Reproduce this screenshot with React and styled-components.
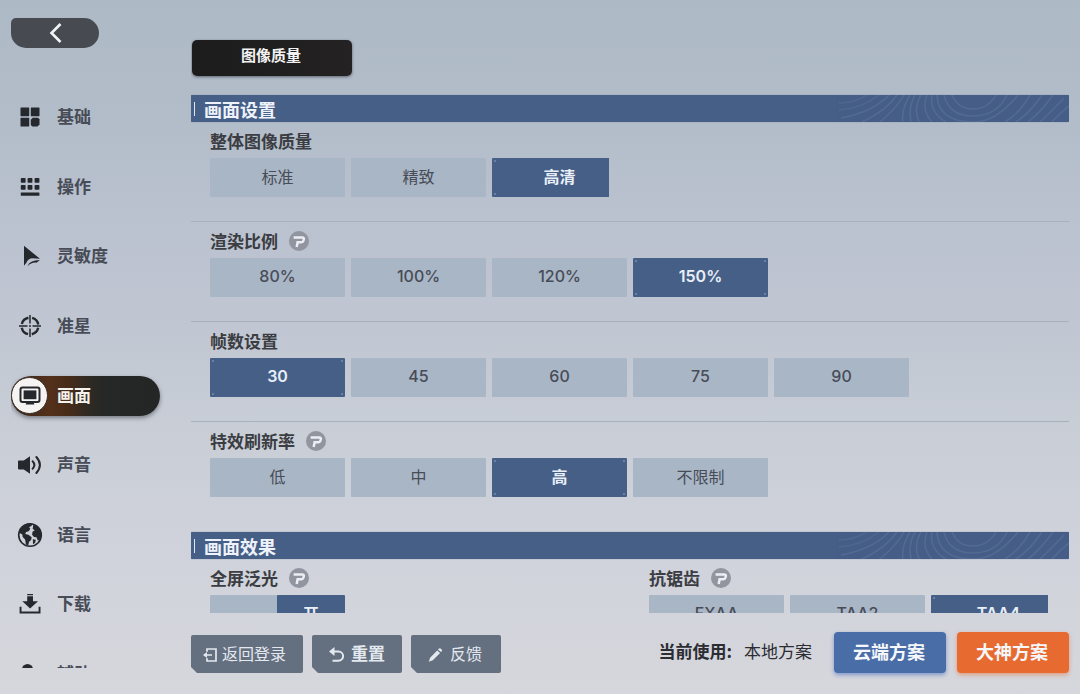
// core
import React, { useState } from 'react'
import styled, { createGlobalStyle, css } from 'styled-components'

// theme
const colors = {
  ink: '#25282d',
  label: '#3b3d42',
  muted: '#474c57',
  blue: '#465f87',
  option: '#a9b6c6',
  slate: '#646f7f',
}

const fonts = '"Noto Sans CJK SC", sans-serif'
const numberFonts = 'Inter, "Noto Sans CJK SC", sans-serif'

// styles
const GlobalStyle = createGlobalStyle`
  *, *::before, *::after {
    box-sizing: border-box;
  }

  body {
    margin: 0;
    font-family: ${fonts};
    color: ${colors.ink};
  }

  button {
    border: 0;
    padding: 0;
    font-family: inherit;
    cursor: pointer;
  }
`

const Page = styled.div`
  display: flex;
  height: 100vh;
  overflow: hidden;
  background: linear-gradient(
    to bottom,
    #adb9c5 0%,
    #b3bdca 18%,
    #bac1cf 31%,
    #c1c7d2 48%,
    #cacfd7 65%,
    #d1d3dc 82%,
    #d6d7dc 100%
  );
`

const Sidebar = styled.aside`
  flex: none;
  display: flex;
  flex-direction: column;
  width: 160px;
  padding: 18px 0 26px 11px;
`

const BackButton = styled.button`
  flex: none;
  display: flex;
  align-items: center;
  justify-content: center;
  width: 88px;
  height: 30px;
  margin-bottom: 49px;
  border-radius: 5px 15px 15px 15px;
  background: #474b51;
`

const NavClip = styled.nav`
  flex: 1;
  min-height: 0;
  margin-right: -10px;
  padding-right: 10px;
  overflow: hidden;
`

const NavList = styled.ul`
  display: flex;
  flex-direction: column;
  justify-content: space-between;
  height: calc(100% + 26px);
  margin: 0;
  padding: 0;
  list-style: none;
`

const NavButton = styled.button`
  display: flex;
  align-items: center;
  gap: 9px;
  width: 100%;
  height: 40px;
  border-radius: 20px;
  background: none;
  color: ${colors.muted};
  font-size: 17px;
  font-weight: bold;
  line-height: 24px;

  ${props => props.$active && css`
    background: linear-gradient(to right, #33261e 0%, #54301a 26%, #482c18 38%, #2f2a23 52%, #262827 62%, #242625 100%);
    box-shadow: 0 2px 4px rgba(40, 44, 54, 0.5);
    color: #f4f2ee;
  `}
`

const NavIcon = styled.span`
  display: flex;
  align-items: center;
  justify-content: center;
  width: 37px;
  height: 37px;
  border-radius: 50%;
  background: ${props => props.$active ? '#f5f4f2' : 'none'};
  border: 1px solid ${props => props.$active ? '#3a2c22' : 'transparent'};
  color: ${colors.ink};
`

const NavText = styled.span`
  padding-bottom: 2px;
`

const Main = styled.main`
  flex: 1;
  min-width: 0;
  display: flex;
  flex-direction: column;
  padding: 0 11px 0 31px;
`

const Scroller = styled.div`
  flex: 1;
  min-height: 0;
  padding-top: 40px;
  overflow: hidden;
`

const Tab = styled.button`
  display: block;
  width: 160px;
  height: 36px;
  margin: 0 0 19px 1px;
  padding: 0 2px 8px 0;
  border-radius: 5px;
  background: linear-gradient(to right, #1c1c1c, #242222);
  box-shadow: 0 1px 3px rgba(40, 44, 54, 0.6);
  color: #f3f3f3;
  font-size: 15px;
  font-weight: bold;
`

const SectionBar = styled.header`
  display: flex;
  align-items: center;
  justify-content: space-between;
  height: 27px;
  padding-left: 3px;
  border-radius: 1px;
  background: ${colors.blue};
  box-shadow: 0 0 1px ${colors.blue};
  overflow: hidden;
`

const SectionTitle = styled.h2`
  display: flex;
  align-items: center;
  gap: 9px;
  margin: 0;
  color: #eef3fb;
  font-size: 18px;
  line-height: 26px;

  &::before {
    content: '';
    width: 1px;
    height: 14px;
    background: #dfe7f3;
  }
`

const Group = styled.section`
  min-width: 0;
  padding: 7px 0 ${props => props.$last ? '35px' : '24px'} 19px;
  border-bottom: ${props => props.$last ? '0' : '1px solid #a9b0bd'};
`

const GroupTitle = styled.h3`
  display: flex;
  align-items: center;
  gap: 11px;
  height: 24px;
  margin: 0 0 5px;
  color: ${colors.label};
  font-size: 17px;
  line-height: 24px;
`

const HelpButton = styled.button`
  display: flex;
  width: 20px;
  height: 20px;
  border-radius: 50%;
  background: #90959f;
`

const OptionRow = styled.div`
  display: flex;
  gap: 6px;
  overflow: hidden;
`

const corner = 'linear-gradient(#6b80a4, #6b80a4)'

const selectedStyle = css`
  background:
    ${corner} 2px 2px / 2px 2px no-repeat,
    ${corner} calc(100% - 2px) 2px / 2px 2px no-repeat,
    ${corner} 2px calc(100% - 2px) / 2px 2px no-repeat,
    ${corner} calc(100% - 2px) calc(100% - 2px) / 2px 2px no-repeat,
    ${colors.blue};
  color: #e9eff8;
`

const Option = styled.button`
  flex: none;
  width: 135px;
  height: 39px;
  padding-bottom: 4px;
  border-radius: 1px;
  background: ${colors.option};
  color: ${colors.muted};
  font-family: ${numberFonts};
  font-size: 16px;
  font-weight: ${props => props.$cjk ? '400' : '500'};

  ${props => props.$active && selectedStyle}
  ${props => props.$active && css`
    font-weight: ${props.$cjk ? 'bold' : '600'};
  `}
`

const SwitchTrack = styled.button`
  display: flex;
  justify-content: ${props => props.$on ? 'flex-end' : 'flex-start'};
  width: 135px;
  height: 39px;
  border-radius: 1px;
  background: ${colors.option};
`

const SwitchThumb = styled.span`
  display: flex;
  align-items: center;
  justify-content: center;
  width: 68px;
  height: 100%;
  padding-bottom: 4px;
  border-radius: 1px;
  background: ${colors.blue};
  color: #e9eff8;
  font-size: 16px;
  font-weight: bold;
`

const Columns = styled.div`
  display: grid;
  grid-template-columns: repeat(2, minmax(0, 1fr));
  gap: 21px;
  padding-right: 21px;
`

const HalfRow = styled.div`
  max-width: 399px;
`

const Footer = styled.footer`
  flex: none;
  display: flex;
  align-items: flex-start;
  justify-content: space-between;
  height: 81px;
  padding-top: 19px;
`

const Actions = styled.div`
  display: flex;
  gap: 9px;
  padding-top: 3px;
`

const ActionButton = styled.button`
  display: flex;
  align-items: center;
  gap: ${props => props.$wide ? '5px' : '7px'};
  width: ${props => props.$wide ? '112px' : '90px'};
  height: 38px;
  padding: 0 0 3px ${props => props.$wide ? '12px' : '17px'};
  border-radius: 2px;
  background: ${colors.slate};
  clip-path: polygon(0 0, 100% 0, 100% 100%, 6px 100%, 0 calc(100% - 6px));
  color: #e4e9f0;
  font-size: ${props => props.$strong ? '17px' : '16px'};
  font-weight: ${props => props.$strong ? 'bold' : '400'};

  svg {
    margin-top: 4px;
  }
`

const Schemes = styled.div`
  display: flex;
  align-items: center;
  gap: 11px;
`

const Current = styled.p`
  display: flex;
  gap: 12px;
  margin: 0 11px 4px 0;
  color: #2b2d33;
  font-size: 17px;
  line-height: 24px;
`

const SchemeButton = styled.button`
  width: 112px;
  height: 41px;
  padding: 0 2px 4px 0;
  border-radius: 4px;
  background: ${props => props.$hot ? '#e76a31' : '#496da7'};
  box-shadow: 0 2px 4px ${props => props.$hot ? 'rgba(231, 106, 49, 0.5)' : 'rgba(73, 109, 190, 0.6)'};
  color: #f6f7fa;
  font-size: 18px;
  font-weight: bold;
`

// icons
const icons = {
  basic: (
    <svg width="20" height="20" viewBox="0 0 20 20" fill="currentColor">
      <rect x="0.5" y="0.5" width="8.7" height="8.7" rx="0.6" />
      <rect x="10.8" y="0.5" width="8.7" height="8.7" rx="0.6" />
      <rect x="0.5" y="10.8" width="8.7" height="8.7" rx="0.6" />
      <path d="M12.8 10.800h5.200l1.500 1.500v5.200l-2 2h-5.200l-1.500-1.500v-5.200z" />
    </svg>
  ),
  controls: (
    <svg width="20" height="20" viewBox="0 0 20 20" fill="currentColor">
      {[1, 8].map(y => [0.8, 7.6, 14.6].map(x => (
        <rect key={`${x}-${y}`} x={x} y={y} width="4.8" height="4.8" rx="0.8" />
      )))}
      <rect x="0.8" y="15.4" width="18.6" height="3.4" rx="0.4" />
    </svg>
  ),
  sensitivity: (
    <svg width="20" height="22" viewBox="0 0 20 22" fill="currentColor">
      <path d="M4 .8l16 13-8.200-.5q-4 .8-5.400 4.400L4 20.800z" />
      <path d="M7.500 21.300q1.800-6.200 12.400-6.300l-3.400 2.700q-5-.6-9 3.600z" />
    </svg>
  ),
  crosshair: (
    <svg width="24" height="24" viewBox="0 0 24 24" fill="none" stroke="currentColor">
      <circle cx="12" cy="12" r="8.4" strokeWidth="2.4" strokeDasharray="9.4 3.8" strokeDashoffset="-1.9" />
      <path d="M12 1v8.500M12 14.500V23M1 12h8.500M14.500 12H23" strokeWidth="1.5" />
      <circle cx="12" cy="12" r="0.6" fill="currentColor" />
    </svg>
  ),
  screen: (
    <svg width="22" height="20" viewBox="0 0 22 20" fill="none" stroke="currentColor">
      <rect x="1.5" y="1.5" width="19" height="14.4" rx="2" strokeWidth="2" />
      <rect x="4.6" y="4.4" width="12.8" height="8.8" fill="currentColor" stroke="none" />
      <path d="M7.6 16l-1 2.6h8.8l-1-2.6z" fill="currentColor" stroke="none" />
    </svg>
  ),
  sound: (
    <svg width="25" height="20" viewBox="0 0 25 20" fill="none" stroke="currentColor" strokeLinecap="round">
      <path d="M1.8 5.6h5L13 1.3v17.4l-6.2-4.3h-5q-.8 0-.8-.8V6.4q0-.8.8-.8z" fill="currentColor" stroke="none" />
      <path d="M15.6 6.2q3.6 3.8 0 7.6" strokeWidth="2" />
      <path d="M19.4 2q7 8 0 16" strokeWidth="2" />
    </svg>
  ),
  language: (
    <svg width="26" height="26" viewBox="0 0 26 26" fill="currentColor">
      <circle cx="13" cy="13" r="11.3" fill="none" stroke="currentColor" strokeWidth="1.6" />
      <path d="M1.800 10.500Q3.500 3.500 10.500 1.600l4.600.2-.4 2-2.600 1.400 1.200 1.600-1.500 2.400-2.700.9-.9 2 3.200.6 3.300 2.500-.6 2.900-2 1.700-1 3.600-2.200-.8-.8-5-2.400-2.600-.4-2.400z" />
      <path d="M16.300 2.500l4.200 1.600 3.500 5.200.3 5-1.600 3.700-1.900.5-1.300-3.200-2.500-.4-1.900-2.200.4-2.900 2.300-1.500-2.100-1.400z" />
      <path d="M15.800 17.200l3 .6-.6 3-2.200 1.400z" />
    </svg>
  ),
  download: (
    <svg width="22" height="22" viewBox="0 0 22 22" fill="currentColor">
      <path d="M8.200 1h5.800v1.300H8.200zM8.200 3.300h5.800v4.900h5L11.100 15.500 3.300 8.200h4.900z" />
      <path d="M.6 13.700h1.900v4.900h17.100v-4.900h1.900v6.900H.6z" />
    </svg>
  ),
  assist: (
    <svg width="22" height="24" viewBox="0 0 22 24" fill="currentColor">
      <circle cx="8.500" cy="7.500" r="5.500" />
      <path d="M0 22q1-7 8-7t8 7z" />
    </svg>
  ),
}

const BackIcon = () => (
  <svg width="14" height="20" viewBox="0 0 14 20" fill="none" stroke="#f2f4f6" strokeWidth="2.600">
    <path d="M12.500 1L3.500 10l9 9" />
  </svg>
)

const HelpIcon = () => (
  <svg width="20" height="20" viewBox="0 0 20 20" fill="none" stroke="#eceef3" strokeWidth="2.500">
    <path d="M4.600 6.600h8.800q1.800 0 1.400 1.600l-.4 1.600q-.4 1.500-1.900 1.500H8.600L7.700 16" />
  </svg>
)

const ExitIcon = () => (
  <svg width="14" height="14" viewBox="0 0 14 14" fill="none" stroke="currentColor" strokeWidth="1.700">
    <path d="M4 3.800V1h9v12H4v-2.800M1.500 7H9" />
    <path d="M0 7l4-3v6z" fill="currentColor" stroke="none" />
  </svg>
)

const ResetIcon = () => (
  <svg width="15" height="15" viewBox="0 0 15 15" fill="none" stroke="currentColor" strokeWidth="1.900">
    <path d="M2 4.500h7.500a4.600 4.600 0 0 1 0 9.200H3.500" />
    <path d="M0 4.500L5.500 0v9z" fill="currentColor" stroke="none" />
  </svg>
)

const PencilIcon = () => (
  <svg width="15" height="15" viewBox="0 0 15 15" fill="currentColor">
    <path d="M10.800 1.800q.8-1 1.700-.2l1.200 1q.8.8 0 1.700l-.8.8-2.900-2.500zM9.200 3.400l2.900 2.500-7.300 7.400L.8 14.700l1.300-4z" />
  </svg>
)

// contour lines at the right end of a section bar
const Contours = () => (
  <svg width="240" height="27" viewBox="0 0 240 27" fill="none" stroke="#5d789f" strokeWidth="1.500" opacity="0.5" aria-hidden="true">
    <path d="M123 0q6 14 21 14T167 0" />
    <path d="M115 0q5 21 29 21T178 0" />
    <path d="M108 0q1 27 37 27 22 0 44-27" />
    <path d="M103 0q-3 17 14 27M98 0q-6 15 5 27M92 0q-8 14-2 27M86 0q-7 12-4 27" />
    <path d="M81 0Q72 15 74 27M75 0Q67 14 51 27M68 0Q57 16 33 27M60 0Q44 17 12 23" />
    <path d="M50 0Q32 14 10 15M38 0Q25 8 10 8" opacity="0.7" />
    <path d="M176 27q13-7 25-27M187 27q14-9 26-27M199 27q12-9 25-27M211 27q12-11 24-24M223 27q8-9 17-16" />
  </svg>
)

const navItems = [
  { id: 'basic', text: '基础' },
  { id: 'controls', text: '操作' },
  { id: 'sensitivity', text: '灵敏度' },
  { id: 'crosshair', text: '准星' },
  { id: 'screen', text: '画面' },
  { id: 'sound', text: '声音' },
  { id: 'language', text: '语言' },
  { id: 'download', text: '下载' },
  { id: 'assist', text: '辅助' },
]

const groups = [
  { title: '整体图像质量', options: ['标准', '精致', '高清'], initial: 2, cjk: true, half: true },
  { title: '渲染比例', options: ['80%', '100%', '120%', '150%'], initial: 3, help: true },
  { title: '帧数设置', options: ['30', '45', '60', '75', '90'], initial: 0 },
  { title: '特效刷新率', options: ['低', '中', '高', '不限制'], initial: 2, cjk: true, help: true },
]

const Section = ({ title }) => (
  <SectionBar>
    <SectionTitle>{title}</SectionTitle>
    <Contours />
  </SectionBar>
)

const Title = ({ children, help }) => (
  <GroupTitle>
    {children}
    {help && <HelpButton type="button" aria-label={`${children}说明`}><HelpIcon /></HelpButton>}
  </GroupTitle>
)

const Options = ({ label, options, initial, cjk }) => {
  const [selected, setSelected] = useState(initial)

  return (
    <OptionRow role="group" aria-label={label}>
      {options.map((option, i) => (
        <Option
          key={option}
          type="button"
          $cjk={cjk}
          $active={i === selected}
          aria-pressed={i === selected}
          onClick={() => setSelected(i)}
        >
          {option}
        </Option>
      ))}
    </OptionRow>
  )
}

const Switch = ({ label }) => {
  const [on, setOn] = useState(true)

  return (
    <SwitchTrack type="button" role="switch" aria-label={label} aria-checked={on} $on={on} onClick={() => setOn(!on)}>
      <SwitchThumb>{on ? '开' : '关'}</SwitchThumb>
    </SwitchTrack>
  )
}

//render
const App = () => {
  const [page, setPage] = useState('screen')

  return (
    <Page>
      <GlobalStyle />
      <Sidebar>
        <BackButton type="button" aria-label="返回"><BackIcon /></BackButton>
        <NavClip>
          <NavList>
            {navItems.map(({ id, text }) => (
              <li key={id}>
                <NavButton type="button" $active={id === page} onClick={() => setPage(id)}>
                  <NavIcon $active={id === page}>{icons[id]}</NavIcon>
                  <NavText>{text}</NavText>
                </NavButton>
              </li>
            ))}
          </NavList>
        </NavClip>
      </Sidebar>
      <Main>
        <Scroller>
          <Tab type="button">图像质量</Tab>
          <Section title="画面设置" />
          {groups.map(({ title, options, initial, cjk, help, half }, i) => {
            const row = <Options label={title} options={options} initial={initial} cjk={cjk} />
            return (
              <Group key={title} $last={i === groups.length - 1}>
                <Title help={help}>{title}</Title>
                {half ? <HalfRow>{row}</HalfRow> : row}
              </Group>
            )
          })}
          <Section title="画面效果" />
          <Columns>
            <Group $last>
              <Title help>全屏泛光</Title>
              <Switch label="全屏泛光" />
            </Group>
            <Group $last>
              <Title help>抗锯齿</Title>
              <Options label="抗锯齿" options={['FXAA', 'TAA2', 'TAA4']} initial={2} />
            </Group>
          </Columns>
        </Scroller>
        <Footer>
          <Actions>
            <ActionButton type="button" $wide><ExitIcon />返回登录</ActionButton>
            <ActionButton type="button" $strong><ResetIcon />重置</ActionButton>
            <ActionButton type="button"><PencilIcon />反馈</ActionButton>
          </Actions>
          <Schemes>
            <Current><b>当前使用:</b><span>本地方案</span></Current>
            <SchemeButton type="button">云端方案</SchemeButton>
            <SchemeButton type="button" $hot>大神方案</SchemeButton>
          </Schemes>
        </Footer>
      </Main>
    </Page>
  )
}

export default App
